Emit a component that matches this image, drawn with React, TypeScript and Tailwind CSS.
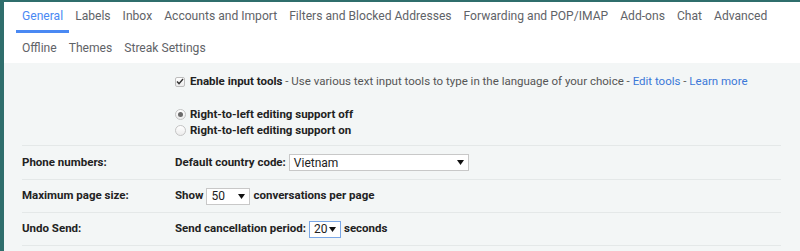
const tabsTop = [
  "General",
  "Labels",
  "Inbox",
  "Accounts and Import",
  "Filters and Blocked Addresses",
  "Forwarding and POP/IMAP",
  "Add-ons",
  "Chat",
  "Advanced",
];

const tabsBottom = ["Offline", "Themes", "Streak Settings"];

function Caret() {
  return (
    <svg width="7" height="5" viewBox="0 0 7 5" className="shrink-0">
      <path d="M0 0 L7 0 L3.5 5 Z" fill="#111" />
    </svg>
  );
}

function FakeSelect({
  value,
  width,
  focused,
}: {
  value: string;
  width: string;
  focused?: boolean;
}) {
  return (
    <div
      className={`mx-[3px] flex h-[17px] shrink-0 items-center justify-between bg-white pl-[4px] pr-[4px] text-[12px] font-normal text-[#222] ${width} ${
        focused ? "border border-[#7aa7e6]" : "border border-[#c8c8c8]"
      }`}
    >
      <span>{value}</span>
      <Caret />
    </div>
  );
}

function Radio({ checked }: { checked?: boolean }) {
  return (
    <span className="flex h-[11px] w-[11px] shrink-0 items-center justify-center rounded-full border border-[#c4c4c4] bg-gradient-to-b from-white to-[#ececec]">
      {checked && <span className="h-[5px] w-[5px] rounded-full bg-[#6a6a6a]" />}
    </span>
  );
}

function Row({
  label,
  h,
  children,
}: {
  label: string;
  h: string;
  children: React.ReactNode;
}) {
  return (
    <div className={`flex items-center border-b border-[#e4e8e8] ${h}`}>
      <div className="w-[153px] shrink-0 text-[11.5px] font-bold text-[#222]">{label}</div>
      <div className="flex items-center whitespace-nowrap text-[11.5px] font-bold text-[#222]">{children}</div>
    </div>
  );
}

export default function App() {
  return (
    <div className="h-[251px] w-[800px] overflow-hidden bg-[#2f6e6c] pl-[4px] pt-[2px]">
      <div className="h-full w-full bg-[#f3f6f6]">
        <div className="bg-white pl-[12px] font-['Roboto',sans-serif] text-[12.1px] text-[#5f6368]">
          <div className="flex h-[31px]">
            {tabsTop.map((t, i) => (
              <div
                key={t}
                className={`flex items-center whitespace-nowrap border-b-[3px] px-[6px] pt-[1px] ${
                  i === 0 ? "border-[#4a89f3] text-[#4a89f3]" : "border-transparent"
                }`}
              >
                {t}
              </div>
            ))}
          </div>
          <div className="flex h-[30px] items-center">
            {tabsBottom.map((t) => (
              <div key={t} className="whitespace-nowrap px-[6px]">
                {t}
              </div>
            ))}
          </div>
        </div>

        <div className="mr-[19px] pl-[18px] font-['Roboto',Arial,sans-serif]">
          <div className="h-[83px] border-b border-[#e4e8e8] pl-[153px]">
            <div className="flex h-[37px] items-center whitespace-nowrap text-[11.5px] text-[#555]">
              <span className="flex h-[10px] w-[10px] shrink-0 items-center justify-center rounded-[2px] border border-[#bdbdbd] bg-gradient-to-b from-white to-[#ececec]">
                <svg width="8" height="7" viewBox="0 0 8 7">
                  <path d="M1 3.6 L3 5.6 L7 1" stroke="#333" strokeWidth="1.4" fill="none" />
                </svg>
              </span>
              <span className="ml-[5px] font-bold text-[#222]">Enable input tools</span>
              <span>&nbsp;- Use various text input tools to type in the language of your choice -&nbsp;</span>
              <span className="text-[#3b78d8]">Edit tools</span>
              <span>&nbsp;-&nbsp;</span>
              <span className="text-[#3b78d8]">Learn more</span>
            </div>
            <div className="mt-[8px] flex flex-col gap-[3px] whitespace-nowrap text-[11.5px] font-bold text-[#222]">
              <div className="flex h-[13px] items-center gap-[4px]">
                <Radio checked />
                <span>Right-to-left editing support off</span>
              </div>
              <div className="flex h-[13px] items-center gap-[4px]">
                <Radio />
                <span>Right-to-left editing support on</span>
              </div>
            </div>
          </div>

          <Row label="Phone numbers:" h="h-[34px]">
            <span>Default country code:</span>
            <FakeSelect value="Vietnam" width="w-[180px]" />
          </Row>
          <Row label="Maximum page size:" h="h-[33px]">
            <span>Show</span>
            <FakeSelect value="50" width="w-[44px]" />
            <span>conversations per page</span>
          </Row>
          <Row label="Undo Send:" h="h-[33px]">
            <span>Send cancellation period:</span>
            <FakeSelect value="20" width="w-[32px]" focused />
            <span>seconds</span>
          </Row>
        </div>
      </div>
    </div>
  );
}
